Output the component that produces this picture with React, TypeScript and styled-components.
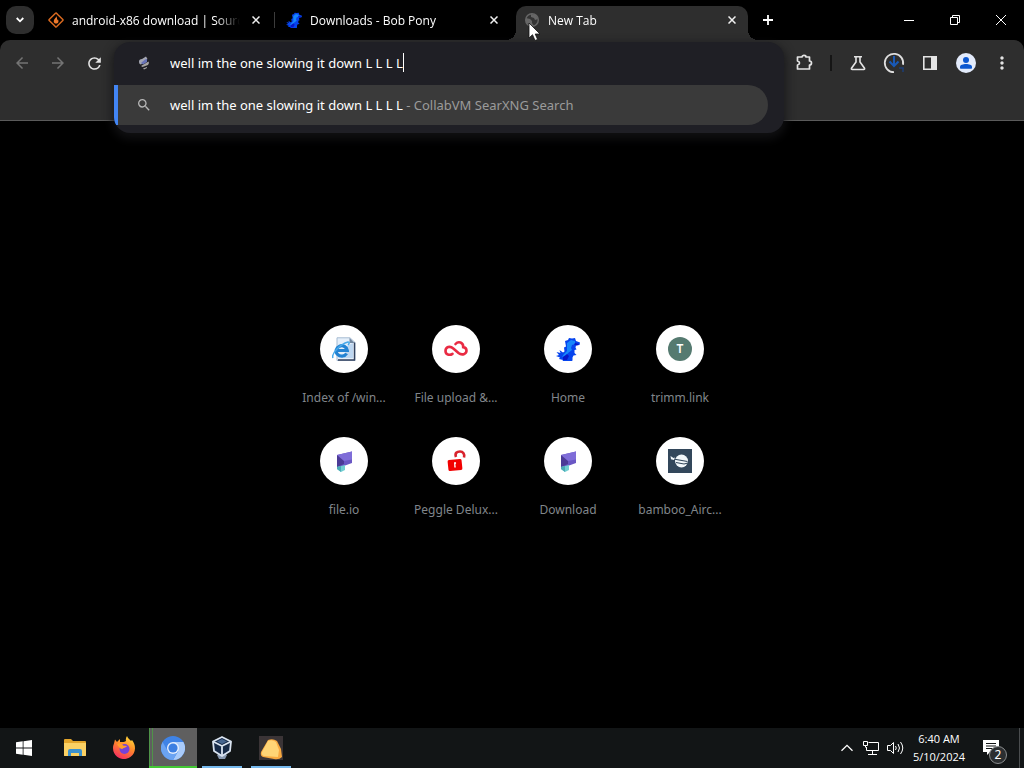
import React from "react";
import styled, { createGlobalStyle, css } from "styled-components";
import { MdArrowBack, MdArrowForward, MdRefresh, MdSearch, MdMoreVert } from "react-icons/md";

const GlobalStyle = createGlobalStyle`
  * { box-sizing: border-box; }
  body {
    margin: 0;
    background: #000;
    font-family: "Segoe UI", "Noto Sans", "Open Sans", sans-serif;
    color: #fff;
  }
  button, input { font: inherit; color: inherit; }
  button { border: 0; padding: 0; background: none; }
  svg { display: block; flex: none; }
`;

const Screen = styled.div`
  min-height: 100vh;
  display: flex;
  flex-direction: column;
  overflow: hidden;
`;

/* Tab strip */
const TabStrip = styled.header`
  height: 40px;
  display: flex;
  align-items: stretch;
  padding-left: 6px;
`;
const TabSearch = styled.button`
  width: 28px;
  height: 28px;
  margin: 6px 6px 0 0;
  border-radius: 10px;
  background: #2e2e2e;
  display: grid;
  place-items: center;
`;
const Tabs = styled.nav`
  flex: 0 1 708px;
  display: flex;
  min-width: 0;
`;
const Tab = styled.div<{ $active?: boolean; $divider?: boolean }>`
  position: relative;
  flex: 0 1 238px;
  min-width: 0;
  height: 34px;
  margin-top: 6px;
  padding: 0 8px 6px;
  display: flex;
  align-items: center;
  gap: 8px;
  ${(p) => p.$divider && css`
    background: linear-gradient(#3c3c3c, #3c3c3c) right 3px top 6px / 1px 16px no-repeat;
  `}
  ${(p) => p.$active && css`
    flex-basis: 232px;
    background: #2e2e2e;
    border-radius: 10px 10px 0 0;
    &::before, &::after {
      content: "";
      position: absolute;
      bottom: 0;
      width: 10px;
      height: 10px;
    }
    &::before { left: -10px; background: radial-gradient(circle at 0 0, transparent 10px, #2e2e2e 10px); }
    &::after { right: -10px; background: radial-gradient(circle at 100% 0, transparent 10px, #2e2e2e 10px); }
  `}
`;
const TabTitle = styled.span`
  flex: 1;
  min-width: 0;
  padding-top: 2px;
  overflow: hidden;
  white-space: nowrap;
  font-family: "Segoe UI", "Open Sans", "Noto Sans", sans-serif;
  font-size: 12px;
  line-height: 18px;
  font-weight: 500;
  mask-image: linear-gradient(90deg, #000 calc(100% - 24px), transparent);
`;
const TabClose = styled.button<{ $gap?: boolean }>`
  width: 16px;
  height: 16px;
  margin-right: ${(p) => (p.$gap ? 6 : 0)}px;
  display: grid;
  place-items: center;
`;
const NewTab = styled.button`
  width: 28px;
  height: 28px;
  margin: 6px 0 0 6px;
  display: grid;
  place-items: center;
`;
const WindowControls = styled.div`
  margin-left: auto;
  display: flex;
`;
const WindowButton = styled.button`
  width: 46px;
  height: 40px;
  display: grid;
  place-items: center;
`;

/* Toolbar */
const Toolbar = styled.div`
  height: 81px;
  padding: 5px 4px 0;
  display: flex;
  align-items: flex-start;
  background: #2e2e2e;
  border-bottom: 1px solid #5a5a5a;
  border-radius: 10px 10px 0 0;
`;
const ToolButton = styled.button<{ $dim?: boolean }>`
  width: 36px;
  height: 36px;
  display: grid;
  place-items: center;
  color: ${(p) => (p.$dim ? "#747474" : "#e4e4e4")};
`;
const ToolDivider = styled.span`
  width: 2px;
  height: 16px;
  margin: 10px 8px;
  background: #151515;
`;
const OmniboxSlot = styled.div`
  position: relative;
  z-index: 1;
  flex: 1;
  min-width: 0;
  height: 36px;
  margin: 0 2px;
`;
const OmniboxPopup = styled.form`
  position: absolute;
  top: -3px;
  left: 0;
  right: 0;
  padding-bottom: 8px;
  border-radius: 16px;
  overflow: hidden;
  background: #1f1f25;
  box-shadow: 0 4px 10px 2px rgba(20, 20, 22, 0.8);
  font-size: 13px;
  line-height: 20px;
  white-space: nowrap;
`;
const LocationRow = styled.label`
  height: 43px;
  padding: 0 0 2px 22px;
  display: flex;
  align-items: center;
`;
const RowIcon = styled.span`
  flex: none;
  width: 34px;
`;
const LocationInput = styled.input`
  field-sizing: content;
  min-width: 20px;
  padding: 0;
  border: 0;
  outline: 0;
  background: none;
`;
const Caret = styled.span`
  width: 1px;
  height: 19px;
  background: #fff;
`;
const Suggestion = styled.button`
  width: calc(100% - 16px);
  height: 40px;
  padding-left: 18px;
  display: flex;
  align-items: center;
  border-left: 4px solid #4285f4;
  border-radius: 0 20px 20px 0;
  background: #3a3a3a;
  text-align: left;
`;
const Engine = styled.span`
  color: #9b9b9b;
`;

/* New tab page */
const Page = styled.main`
  flex: 1;
  display: flex;
  justify-content: center;
  align-items: flex-start;
  padding: 188px 16px 16px;
`;
const Shortcuts = styled.div`
  display: grid;
  grid-template-columns: repeat(4, 112px);
  grid-auto-rows: 112px;
`;
const Shortcut = styled.a`
  padding: 16px 12px 0;
  display: flex;
  flex-direction: column;
  align-items: center;
  gap: 16px;
  text-decoration: none;
  color: #80868b;
`;
const ShortcutIcon = styled.span`
  width: 48px;
  height: 48px;
  border-radius: 50%;
  background: #fff;
  display: grid;
  place-items: center;
`;
const ShortcutLabel = styled.span`
  max-width: 100%;
  font-size: 12px;
  line-height: 18px;
  white-space: nowrap;
`;
const LetterIcon = styled.span`
  width: 24px;
  height: 24px;
  border-radius: 50%;
  background: #557a70;
  color: #fff;
  font-size: 12px;
  line-height: 24px;
  font-weight: 600;
  text-align: center;
`;

/* Taskbar */
const Taskbar = styled.footer`
  height: 40px;
  display: flex;
  background: #121516;
`;
const StartButton = styled.button`
  width: 48px;
  height: 40px;
  margin-right: 3px;
  display: grid;
  place-items: center;
`;
const TaskButton = styled.button<{ $state?: "open" | "active" }>`
  width: 48px;
  height: 40px;
  margin-right: 1px;
  display: grid;
  place-items: center;
  ${(p) => p.$state === "open" && css`
    background: linear-gradient(#76b9ed, #76b9ed) center bottom / 40px 2px no-repeat;
  `}
  ${(p) => p.$state === "active" && css`
    background:
      linear-gradient(#43c935, #43c935) bottom / 100% 2px no-repeat,
      linear-gradient(90deg, #4f9448 1px, #5f5f5f 1px 3px, #4f9448 3px 4px, #5f5f5f 4px);
  `}
`;
const Tray = styled.div`
  margin-left: auto;
  display: flex;
  align-items: center;
`;
const TrayButton = styled.button`
  width: 24px;
  height: 40px;
  display: grid;
  place-items: center;
`;
const Clock = styled.time`
  width: 64px;
  text-align: center;
  font-family: "Segoe UI", "Open Sans", "Noto Sans", sans-serif;
  font-size: 11px;
  line-height: 18px;
  white-space: nowrap;
`;
const ActionCenter = styled.button`
  position: relative;
  width: 48px;
  height: 40px;
  padding-left: 12px;
  display: flex;
  align-items: center;
`;
const CountBadge = styled.span`
  position: absolute;
  left: 18px;
  top: 18px;
  width: 18px;
  height: 18px;
  border: 1px solid #8a8d8e;
  border-radius: 50%;
  background: #2b2e30;
  font-size: 12px;
  line-height: 16px;
  text-align: center;
`;
const ShowDesktop = styled.button`
  width: 5px;
  height: 40px;
  border-left: 1px solid #4a4d4f;
`;

const Pointer = styled.svg`
  position: absolute;
  left: 12px;
  top: 16px;
  z-index: 2;
`;

const CloseGlyph = () => (
  <svg width="8" height="8" viewBox="0 0 8 8" stroke="#f0f0f0" strokeWidth="1.5">
    <path d="M.5.5l7 7M7.5.5l-7 7" />
  </svg>
);
const SourceForgeIcon = () => (
  <svg width="16" height="16" viewBox="0 0 16 16">
    <path d="M7.500 1.200L1.200 7.500q-.5.500 0 1L5.800 13M8.500 14.800l6.300-6.300q.5-.5 0-1L10.200 3M7.500 1.200q.5-.4 1 0L10.200 3M5.800 13l1.700 1.800q.5.400 1 0" fill="none" stroke="#d9691f" strokeWidth="1.500" />
    <path d="M8.200 4.200C8.200 6 5.700 7 5.700 9.200c0 1.500 1.100 2.400 2.400 2.400s2.400-.9 2.400-2.400c0-1-.4-1.800-.9-2.300 0 .9-.3 1.300-.7 1.500.3-1.600.3-2.900-.7-4.200z" fill="#f07a2c" />
  </svg>
);
const PonyIcon = ({ size = 16 }: { size?: number }) => (
  <svg width={size} height={size} viewBox="0 0 24 24">
    <path d="M9 4l3-1 1-2 3 .5 3-.5 1 3 4 1.500-.5 2.500-3.500.5-.5 2 1 2-2 .5v3l2 2-3 .5-1 2v3l-2 1.500H6l1-2-4-1 1-1.500-4-1.500 3-1-2.500-3 4 1-1-3 3.500 2.500 1.500-1-.5-4 2-1z" fill="#0644ee" />
    <path d="M11 6l4-3 4 1v3l-3 1-1 3 1 2-4 3-2 3-4 1 2-3 3-3v-3z" fill="#1687fb" />
    <path d="M19 6l4 1-2 1.500-3-1zM7 20l4-3 2 2-2 4H7z" fill="#0717c8" />
  </svg>
);
const GlobeIcon = () => (
  <svg width="16" height="16" viewBox="0 0 16 16">
    <circle cx="8" cy="8" r="6.300" fill="#343434" stroke="#666" strokeWidth="1.500" />
    <path d="M2 6l4 1 2 2v2l2 3-4 0-4-4zM7 2l5 1 2 4-3 1-1-2-3-1z" fill="#666" />
  </svg>
);
const SearxIcon = () => (
  <svg width="16" height="16" viewBox="0 0 16 16">
    <path d="M3 6.500Q3 4 6 4L10 1.500l1.500 2.500L5 9.500q-2 0-2-3z" fill="#a4a6b2" />
    <path d="M5 8l4-3.500 2-.5v3L7 9.500z" fill="#6873b8" />
    <path d="M5 11L12.500 6.500l.5 1.500-1 2-5.500 2zM7 13.500l4-1.500v1l-3 1.500z" fill="#a8a5a3" />
  </svg>
);
const InternetExplorerIcon = () => (
  <svg width="24" height="24" viewBox="0 0 24 24">
    <path d="M5 .8h13l5 4.700v18H5z" fill="#e5effa" stroke="#a5bbd2" />
    <path d="M22.500 5.500V23H6" fill="none" stroke="#33415d" strokeWidth="1.400" />
    <path d="M17.500 1l5 5h-5z" fill="#71879f" />
    <path d="M15 9l6-3v15h-9z" fill="#bed7f1" />
    <path d="M14.600 16.500a5.600 5.200 0 1 1 .7-3H5" fill="none" stroke="#2383d3" strokeWidth="3.200" />
    <path d="M1 21C-1 17 8 7 16 5c2 0 1 2 0 3" fill="none" stroke="#48a9ea" strokeWidth="1.500" />
  </svg>
);
const InfinityIcon = () => (
  <svg width="24" height="24" viewBox="0 0 24 24" fill="none" stroke="#e92b43" strokeWidth="2.600" strokeLinecap="round">
    <path d="M8.500 16.800c-3 2-7 .7-7-2.800 0-4 4.500-5.500 7.500-2.700l5.500 4.700c3.500 2.800 8 1 8-2.200 0-2.200-1.500-3.500-3.300-3.700.3-4.800-4.800-6.300-7.700-3.100" />
  </svg>
);
const FileIoIcon = () => (
  <svg width="24" height="24" viewBox="0 0 24 24">
    <path d="M5 6l15-3.500V14L9 18H5z" fill="#6a57c4" />
    <path d="M5 6l7 4v5l-7 3z" fill="#4b3a96" />
    <path d="M5 6l15-3.500v8L12 12z" fill="#7f6dd8" />
    <path d="M5 18l8-2v5l-4 2-4-3z" fill="#72cfd2" />
    <path d="M5 18l4-1v6l-4-3z" fill="#4baab5" />
  </svg>
);
const OpenLockIcon = () => (
  <svg width="24" height="24" viewBox="0 0 24 24">
    <path d="M12 8C10.500 4 13 2.500 16 2.500s5 2.500 4 6" fill="none" stroke="#d8222c" strokeWidth="2.600" />
    <rect x="4" y="10.500" width="14" height="11" rx="1.500" fill="#f20000" transform="rotate(-6 11 16)" />
    <path d="M10 13.500q1.500-1 2.200.6l-.8 1.400.4 3h-1.500l-.1-3z" fill="#fff" />
  </svg>
);
const BambooIcon = () => (
  <svg width="24" height="24" viewBox="0 0 24 24">
    <path d="M0 0h24v24H0z" fill="#33475b" />
    <circle cx="13.500" cy="12" r="6.500" fill="#f2f7fa" />
    <path d="M3 7l2.500 3 14 2.500M8 13.500l8 1.500 4-1" fill="none" stroke="#33475b" strokeWidth="1.200" />
    <path d="M2.500 7l3 2 1.500-.5L6 11l-3-.7z" fill="#f2f7fa" />
  </svg>
);

const tabs = [
  { title: "android-x86 download | Source", icon: <SourceForgeIcon />, divider: true },
  { title: "Downloads - Bob Pony", icon: <PonyIcon /> },
  { title: "New Tab", icon: <GlobeIcon />, active: true },
];

const shortcuts = [
  { label: "Index of /win...", icon: <InternetExplorerIcon /> },
  { label: "File upload &...", icon: <InfinityIcon /> },
  { label: "Home", icon: <PonyIcon size={24} /> },
  { label: "trimm.link", icon: <LetterIcon>T</LetterIcon> },
  { label: "file.io", icon: <FileIoIcon /> },
  { label: "Peggle Delux...", icon: <OpenLockIcon /> },
  { label: "Download", icon: <FileIoIcon /> },
  { label: "bamboo_Airc...", icon: <BambooIcon /> },
];

export default function App() {
  const [query, setQuery] = React.useState("well im the one slowing it down L L L L");
  return (
    <Screen>
      <GlobalStyle />
      <TabStrip>
        <TabSearch aria-label="Search tabs">
          <svg width="8" height="6" viewBox="0 0 8 6" fill="none" stroke="#fff" strokeWidth="1.800"><path d="M.7 1L4 4.300 7.300 1" /></svg>
        </TabSearch>
        <Tabs aria-label="Tabs">
          {tabs.map((t) => (
            <Tab key={t.title} $active={t.active} $divider={t.divider}>
              {t.icon}
              <TabTitle>{t.title}</TabTitle>
              <TabClose $gap={!t.active} aria-label="Close tab"><CloseGlyph /></TabClose>
              {t.active && (
                <Pointer width="13" height="20" viewBox="0 0 13 20">
                  <path d="M1 1v15l3.500-3.300L7 18.500l2.600-1.100L7.200 12H12z" fill="#fff" stroke="#111" strokeWidth=".8" />
                </Pointer>
              )}
            </Tab>
          ))}
        </Tabs>
        <NewTab aria-label="New tab">
          <svg width="10" height="10" viewBox="0 0 10 10" stroke="#fff" strokeWidth="1.800"><path d="M5 0v10M0 5h10" /></svg>
        </NewTab>
        <WindowControls>
          <WindowButton aria-label="Minimize">
            <svg width="10" height="10" viewBox="0 0 10 10"><path d="M0 5h10v1H0z" fill="#fff" /></svg>
          </WindowButton>
          <WindowButton aria-label="Restore">
            <svg width="10" height="10" viewBox="0 0 10 10" fill="none" stroke="#fff"><path d="M.5 2.500h7v7h-7zM2.500 2.500v-2h7v7h-2" /></svg>
          </WindowButton>
          <WindowButton aria-label="Close">
            <svg width="10" height="10" viewBox="0 0 10 10" stroke="#fff"><path d="M0 0l10 10M10 0L0 10" /></svg>
          </WindowButton>
        </WindowControls>
      </TabStrip>

      <Toolbar>
        <ToolButton $dim aria-label="Back"><MdArrowBack size={18} /></ToolButton>
        <ToolButton $dim aria-label="Forward"><MdArrowForward size={18} /></ToolButton>
        <ToolButton aria-label="Reload"><MdRefresh size={19} /></ToolButton>
        <OmniboxSlot>
          <OmniboxPopup onSubmit={(e) => e.preventDefault()}>
            <LocationRow>
              <RowIcon><SearxIcon /></RowIcon>
              <LocationInput aria-label="Address and search bar" value={query} onChange={(e) => setQuery(e.target.value)} />
              <Caret />
            </LocationRow>
            <Suggestion>
              <RowIcon><MdSearch size={16} color="#b5b5b5" /></RowIcon>
              <span>{query}<Engine> - CollabVM SearXNG Search</Engine></span>
            </Suggestion>
          </OmniboxPopup>
        </OmniboxSlot>
        <ToolButton aria-label="Extensions">
          <svg width="18" height="18" viewBox="0 0 18 18">
            <path d="M2.500 3H7a2 1.600 0 0 1 4 0h3.500v4a2 2 0 0 1 0 4v4h-12v-4c2.700-.5 2.700-3.500 0-4z" fill="none" stroke="currentColor" strokeWidth="1.700" strokeLinejoin="round" />
          </svg>
        </ToolButton>
        <ToolDivider />
        <ToolButton aria-label="Experiments">
          <svg width="16" height="16" viewBox="0 0 16 16" fill="none" stroke="currentColor" strokeWidth="1.600">
            <path d="M4 1.800h8M6 2v5l-4.500 6.200q-.5 1.300.8 1.300h11.400q1.300 0 .8-1.300L10 7V2" />
          </svg>
        </ToolButton>
        <ToolButton aria-label="Downloads">
          <svg width="22" height="22" viewBox="0 0 22 22" fill="none">
            <path d="M11 20.200a9.200 9.200 0 1 1 9-7.400" stroke="#dedede" strokeWidth="1.800" />
            <path d="M11 4v10M6.500 9.500L11 14l4.500-4.500" stroke="#1959b6" strokeWidth="2" />
            <path d="M16 16h4v4" stroke="#1c3f78" strokeWidth="1.500" />
          </svg>
        </ToolButton>
        <ToolButton aria-label="Side panel">
          <svg width="14" height="14" viewBox="0 0 14 14"><path d="M.8.8h12.400v12.400H.8z" fill="none" stroke="currentColor" strokeWidth="1.600" /><path d="M8 1h5v12H8z" fill="currentColor" /></svg>
        </ToolButton>
        <ToolButton aria-label="Profile">
          <svg width="20" height="20" viewBox="0 0 20 20"><circle cx="10" cy="10" r="10" fill="#e3ebfb" /><circle cx="10" cy="7" r="3" fill="#0b57d0" /><path d="M4 15v-1.200c0-1.800 3-2.800 6-2.800s6 1 6 2.800V15q0 .8-.8.8H4.800Q4 15.800 4 15z" fill="#0b57d0" /></svg>
        </ToolButton>
        <ToolButton aria-label="Menu"><MdMoreVert size={20} /></ToolButton>
      </Toolbar>

      <Page>
        <Shortcuts>
          {shortcuts.map((s) => (
            <Shortcut key={s.label} href="#">
              <ShortcutIcon>{s.icon}</ShortcutIcon>
              <ShortcutLabel>{s.label}</ShortcutLabel>
            </Shortcut>
          ))}
        </Shortcuts>
      </Page>

      <Taskbar>
        <StartButton aria-label="Start">
          <svg width="16" height="16" viewBox="0 0 16 16" fill="#fff"><path d="M0 2.300l6.700-1v6.300H0zM7.500 1.200L16 0v7.600H7.500zM0 8.400h6.700v6.300l-6.700-1zM7.500 8.400H16V16l-8.500-1.200z" /></svg>
        </StartButton>
        <TaskButton aria-label="File Explorer">
          <svg width="22" height="20" viewBox="0 0 22 20">
            <path d="M0 2q0-1 1-1h6l2 2h12q1 0 1 1v14H0z" fill="#e3a52b" />
            <path d="M0 5h22v12q0 1-1 1H1q-1 0-1-1z" fill="#fbd164" />
            <path d="M4 18v-5q0-2 2-2h10q2 0 2 2v5h-3v-3H7v3z" fill="#3b91ce" />
          </svg>
        </TaskButton>
        <TaskButton aria-label="Firefox">
          <svg width="24" height="24" viewBox="0 0 24 24">
            <defs>
              <linearGradient id="flame" x1=".8" y1="0" x2=".3" y2="1"><stop offset="0" stopColor="#ffe03b" /><stop offset=".45" stopColor="#ff8a2a" /><stop offset="1" stopColor="#f52c62" /></linearGradient>
            </defs>
            <path d="M15 0c1 3 3 3.500 4 5l1-1c2 3 3 5 3 8.500A11 11 0 1 1 2 7.500l1-4 2 2.500 3-3v3c3 0 5 0 6-1-.5-2 0-3.500 1-5z" fill="url(#flame)" />
            <circle cx="12.500" cy="13" r="5" fill="#7542d8" />
            <path d="M5 8c3-2 6 0 6 1.500l4 .5c-1 2-4 1.500-4.500 3-2 0-4-2-5.500-5z" fill="#ff9c2b" />
          </svg>
        </TaskButton>
        <TaskButton $state="active" aria-label="Chromium">
          <svg width="24" height="24" viewBox="0 0 24 24">
            <circle cx="12" cy="12" r="12" fill="#3f83e6" />
            <path d="M12 6h10.400A12 12 0 0 1 12 24l5.200-9z" fill="#a9cbfa" />
            <path d="M1.600 6A12 12 0 0 0 12 24l5.200-9L12 18l-5.200-3z" fill="#6aa3f2" />
            <circle cx="12" cy="12" r="6" fill="#e6effd" />
            <circle cx="12" cy="12" r="4.600" fill="#3c7fe2" />
          </svg>
        </TaskButton>
        <TaskButton $state="open" aria-label="VirtualBox">
          <svg width="22" height="24" viewBox="0 0 22 24" strokeLinejoin="round">
            <path d="M11 16l5 3-2 4H8l-2-4z" fill="#8898b0" />
            <path d="M2 5.500L11 1l9 4.500-1 9.500-8 5-8-5z" fill="#172a47" stroke="#d9e3f0" strokeWidth="1.800" />
            <path d="M2 5.500L11 10l9-4.500M11 10v10" fill="none" stroke="#d9e3f0" strokeWidth="1.800" />
            <path d="M6 5.500l5-2.500 5 2.500-5 2.500z" fill="#46658f" />
          </svg>
        </TaskButton>
        <TaskButton $state="open" aria-label="Notes">
          <svg width="24" height="24" viewBox="0 0 24 24">
            <path d="M0 0h24v24H0z" fill="#3a3436" />
            <path d="M9 4q5-2 9 1l4 8 1 8q-3 3-8 2L4 21q-3-1-2-5z" fill="#f8a940" />
            <path d="M9 5q4-2 8 1l3 8-1 7-14-1q-3-1-2-4z" fill="#ffd576" />
          </svg>
        </TaskButton>
        <Tray>
          <TrayButton aria-label="Show hidden icons">
            <svg width="12" height="8" viewBox="0 0 12 8" fill="none" stroke="#fff" strokeWidth="1.300"><path d="M.5 6.800L6 1.300l5.500 5.500" /></svg>
          </TrayButton>
          <TrayButton aria-label="Network">
            <svg width="16" height="16" viewBox="0 0 16 16" fill="none" stroke="#fff"><path d="M5.500 2.500h10v8h-12V7M.5 1.500h4v4h-4zM2.500 5.500v2M9.500 11v3M5 14.500h9" /></svg>
          </TrayButton>
          <TrayButton aria-label="Volume">
            <svg width="17" height="14" viewBox="0 0 17 14" fill="none" stroke="#fff"><path d="M.5 4.500h3l3-3v11l-3-3h-3zM8.500 5q1.500 2 0 4M11 3q3 4 0 8M13.500 1q4.500 6 0 12" /></svg>
          </TrayButton>
          <Clock>6:40 AM<br />5/10/2024</Clock>
          <ActionCenter aria-label="2 notifications">
            <svg width="16" height="16" viewBox="0 0 16 16"><path d="M0 0h16v12H7l-3 3v-3H0z" fill="#fff" /><path d="M3 3.500h10M3 6h10M3 8.500h7" stroke="#121516" strokeWidth="1.200" /></svg>
            <CountBadge>2</CountBadge>
          </ActionCenter>
          <ShowDesktop aria-label="Show desktop" />
        </Tray>
      </Taskbar>
    </Screen>
  );
}
